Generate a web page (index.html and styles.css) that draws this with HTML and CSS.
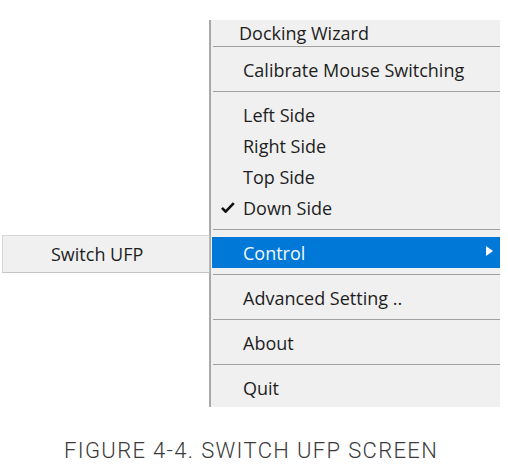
FILE: index.html
```html
<!DOCTYPE html>
<html>
<head>
<meta charset="utf-8">
<link rel="stylesheet" href="styles.css">
</head>
<body>
<div class="stage">
  <div class="menu">
    <div class="sec first"><div class="item wizard">Docking Wizard</div></div>
    <div class="sep"></div>
    <div class="sec"><div class="item">Calibrate Mouse Switching</div></div>
    <div class="sep"></div>
    <div class="sec">
      <div class="item">Left Side</div>
      <div class="item">Right Side</div>
      <div class="item">Top Side</div>
      <div class="item checked">
        <svg class="check" width="14" height="11" viewBox="0 0 14 11"><path d="M1 5.8 L4.6 9.6 L12.8 1.2" fill="none" stroke="#111" stroke-width="2.6" stroke-linejoin="miter"/></svg>
        Down Side
      </div>
    </div>
    <div class="sep"></div>
    <div class="sec">
      <div class="item active">Control
        <svg class="arrow" width="7" height="10" viewBox="0 0 7 10"><path d="M0 0 L7 5 L0 10 Z" fill="#fff"/></svg>
        <div class="submenu"><span>Switch UFP</span></div>
      </div>
    </div>
    <div class="sep"></div>
    <div class="sec"><div class="item">Advanced Setting ..</div></div>
    <div class="sep"></div>
    <div class="sec"><div class="item">About</div></div>
    <div class="sep"></div>
    <div class="sec last"><div class="item">Quit</div></div>
  </div>
  <p class="caption">FIGURE 4-4. SWITCH UFP SCREEN</p>
</div>
</body>
</html>
```

FILE: styles.css
```css
html, body {
  margin: 0;
  padding: 0;
  background: #ffffff;
}
.stage {
  width: 508px;
  height: 469px;
  padding-top: 20px;
  box-sizing: border-box;
  overflow: hidden;
}
.menu {
  margin-left: 209px;
  width: 291px;
  box-sizing: border-box;
  background: #f0f0f0;
  border-left: 2px solid #a9a9a9;
  font-family: "Open Sans", "Noto Sans", sans-serif;
  font-size: 18px;
  color: #1e1e1e;
}
.sec {
  padding: 7px 0 6px 0;
}
.sec.first {
  padding: 0;
}
.sec.last {
  padding-bottom: 4px;
}
.item {
  position: relative;
  height: 31px;
  line-height: 32px;
  padding-left: 32px;
  white-space: nowrap;
}
.wizard {
  height: 26px;
  line-height: 26px;
  padding-left: 28px;
}
.sep {
  height: 1px;
  margin-left: 2px;
  background: #a0a0a0;
}
.check {
  position: absolute;
  left: 10px;
  top: 10px;
}
.active {
  background: #0078d7;
  color: #f4f8fd;
  margin-left: 1px;
  padding-left: 31px;
}
.arrow {
  position: absolute;
  right: 7px;
  top: 9px;
}
.submenu {
  position: absolute;
  top: -2px;
  left: -210px;
  width: 208px;
  height: 38px;
  box-sizing: border-box;
  background: #f0f0f0;
  border: 1px solid #d6d6d6;
  border-right-color: #b8b8b8;
  border-bottom-color: #c4c4c4;
  color: #1e1e1e;
  line-height: 37px;
  padding-left: 48px;
}
.caption {
  margin: 31px 0 0 0;
  padding-left: 64px;
  font-family: Roboto, "Liberation Sans", sans-serif;
  font-weight: 300;
  font-size: 22px;
  letter-spacing: 1.35px;
  color: #3a3a3a;
  white-space: nowrap;
}
```
